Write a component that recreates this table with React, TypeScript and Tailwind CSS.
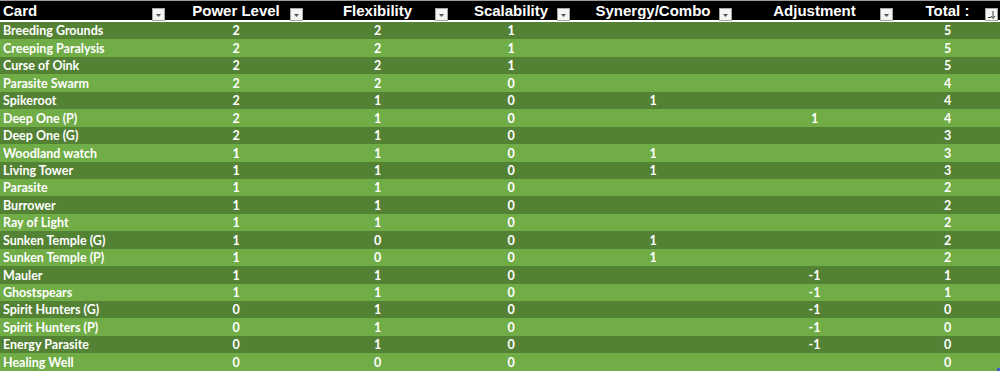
import React from "react";

type Row = [string, string, string, string, string, string, string];

const rows: Row[] = [
  ["Breeding Grounds", "2", "2", "1", "", "", "5"],
  ["Creeping Paralysis", "2", "2", "1", "", "", "5"],
  ["Curse of Oink", "2", "2", "1", "", "", "5"],
  ["Parasite Swarm", "2", "2", "0", "", "", "4"],
  ["Spikeroot", "2", "1", "0", "1", "", "4"],
  ["Deep One (P)", "2", "1", "0", "", "1", "4"],
  ["Deep One (G)", "2", "1", "0", "", "", "3"],
  ["Woodland watch", "1", "1", "0", "1", "", "3"],
  ["Living Tower", "1", "1", "0", "1", "", "3"],
  ["Parasite", "1", "1", "0", "", "", "2"],
  ["Burrower", "1", "1", "0", "", "", "2"],
  ["Ray of Light", "1", "1", "0", "", "", "2"],
  ["Sunken Temple (G)", "1", "0", "0", "1", "", "2"],
  ["Sunken Temple (P)", "1", "0", "0", "1", "", "2"],
  ["Mauler", "1", "1", "0", "", "-1", "1"],
  ["Ghostspears", "1", "1", "0", "", "-1", "1"],
  ["Spirit Hunters (G)", "0", "1", "0", "", "-1", "0"],
  ["Spirit Hunters (P)", "0", "1", "0", "", "-1", "0"],
  ["Energy Parasite", "0", "1", "0", "", "-1", "0"],
  ["Healing Well", "0", "0", "0", "", "", "0"],
];

const headers = ["Card", "Power Level", "Flexibility", "Scalability", "Synergy/Combo", "Adjustment", "Total :"];
const widths = ["w-[167px]", "w-[138px]", "w-[145px]", "w-[122px]", "w-[162px]", "w-[161px]", "w-[105px]"];

function FilterButton({ sort }: { sort?: boolean }) {
  return (
    <div className="absolute right-[2px] bottom-[-1px] w-[13px] h-[13px] bg-[#f4f4f4] border border-[#a8a8a8] flex items-center justify-center">
      {sort ? (
        <svg width="11" height="11" viewBox="0 0 11 11">
          <line x1="7" y1="2" x2="7" y2="9" stroke="#444" strokeWidth="1" />
          <path d="M5 7 L7 9.5 L9 7" fill="none" stroke="#444" strokeWidth="1" />
          <line x1="2" y1="8.5" x2="5" y2="8.5" stroke="#444" strokeWidth="1" />
        </svg>
      ) : (
        <svg width="11" height="11" viewBox="0 0 11 11">
          <path d="M3 5 L8 5 L5.5 8 Z" fill="#555" />
        </svg>
      )}
    </div>
  );
}

export default function App() {
  return (
    <div
      className="w-[1000px] h-[371px] overflow-hidden bg-white relative"
      style={{ fontFamily: "'Liberation Sans', Arial, sans-serif" }}
    >
      <div className="flex h-[20px] bg-black border-t border-[#9a9a9a]">
        {headers.map((h, i) => (
          <div key={i} className={`${widths[i]} relative h-full flex items-center ${i === 0 ? "justify-start pl-[3px]" : "justify-center"}`}>
            <span className="text-white font-bold text-[15px] leading-none">{h}</span>
            <FilterButton sort={i === 6} />
          </div>
        ))}
      </div>
      <div className="h-[2px] bg-white" />
      <div className="flex flex-col" style={{ fontFamily: "Lato, 'Liberation Sans', sans-serif" }}>
        {rows.map((r, ri) => (
          <div key={ri} className={`flex h-[17.45px] ${ri % 2 === 0 ? "bg-[#548235]" : "bg-[#70ad47]"}`}>
            {r.map((c, ci) => (
              <div
                key={ci}
                className={`${widths[ci]} flex items-center pt-[2px] text-white font-bold text-[12.5px] leading-none ${ci === 0 ? "justify-start pl-[3px]" : "justify-center"}`}
              >
                {c}
              </div>
            ))}
          </div>
        ))}
      </div>
      <div className="absolute right-0 bottom-0 w-[3px] h-[3px] bg-[#3a5fcd]" />
    </div>
  );
}
